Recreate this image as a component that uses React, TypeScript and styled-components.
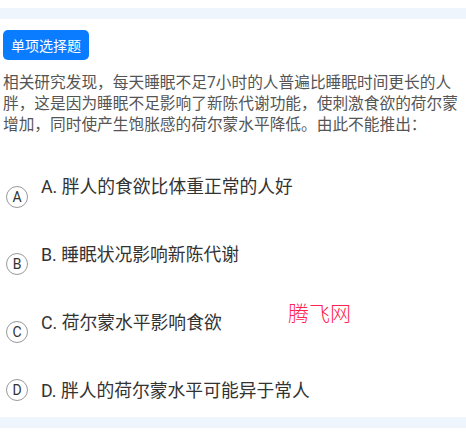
import React from "react";
import styled, { createGlobalStyle } from "styled-components";

const Global = createGlobalStyle`
  html, body { margin: 0; padding: 0; background: #fff; }
  body {
    font-family: Roboto, "Noto Sans CJK SC", sans-serif;
    text-autospace: no-autospace;
  }
`;

const Page = styled.div`
  position: relative;
  width: 466px;
  min-height: 441px;
  padding-top: 8px;
  box-sizing: border-box;
`;

const Band = styled.div`
  height: 11px;
  background: #eef5fd;
`;

const Content = styled.div`
  padding: 11px 3px 0 3px;
`;

const Badge = styled.div`
  display: inline-flex;
  align-items: center;
  height: 30px;
  padding: 0 8px;
  background: #0a7cff;
  color: #fff;
  font-size: 14px;
  border-radius: 5px;
`;

const Stem = styled.p`
  margin: 12px 0 0 0;
  font-size: 15.7px;
  line-height: 21px;
  color: #555;
  word-break: break-all;
`;

const Options = styled.div`
  display: flex;
  flex-direction: column;
  gap: 44px;
  margin-top: 40px;
  padding-left: 3px;
  margin-bottom: 14px;
`;

const Row = styled.div`
  display: flex;
  align-items: flex-start;
  gap: 13px;
  height: 24px;
`;

const Circle = styled.span<{ $shift: number }>`
  flex: none;
  width: 20px;
  height: 20px;
  margin-top: ${(p) => p.$shift}px;
  border: 1px solid #999;
  border-radius: 50%;
  display: flex;
  align-items: center;
  justify-content: center;
  font-size: 14px;
  line-height: 1;
  color: #333;
`;

const OptText = styled.span`
  font-size: 17.8px;
  line-height: 24px;
  color: #333;
`;

const Watermark = styled.div`
  position: absolute;
  left: 288px;
  top: 298px;
  font-family: "Noto Sans CJK SC", sans-serif;
  font-weight: 300;
  font-size: 21px;
  line-height: 28px;
  color: #ff2450;
`;

const options = [
  { key: "A", text: "A. 胖人的食欲比体重正常的人好", shift: 11 },
  { key: "B", text: "B. 睡眠状况影响新陈代谢", shift: 10 },
  { key: "C", text: "C. 荷尔蒙水平影响食欲", shift: 10 },
  { key: "D", text: "D. 胖人的荷尔蒙水平可能异于常人", shift: 0 },
];

export default function App() {
  return (
    <Page>
      <Global />
      <Band />
      <Content>
        <Badge>单项选择题</Badge>
        <Stem>
          相关研究发现，每天睡眠不足7小时的人普遍比睡眠时间更长的人胖，这是因为睡眠不足影响了新陈代谢功能，使刺激食欲的荷尔蒙增加，同时使产生饱胀感的荷尔蒙水平降低。由此不能推出：
        </Stem>
        <Options>
          {options.map((o) => (
            <Row key={o.key}>
              <Circle $shift={o.shift}>{o.key}</Circle>
              <OptText>{o.text}</OptText>
            </Row>
          ))}
        </Options>
      </Content>
      <Band />
      <Watermark>腾飞网</Watermark>
    </Page>
  );
}
